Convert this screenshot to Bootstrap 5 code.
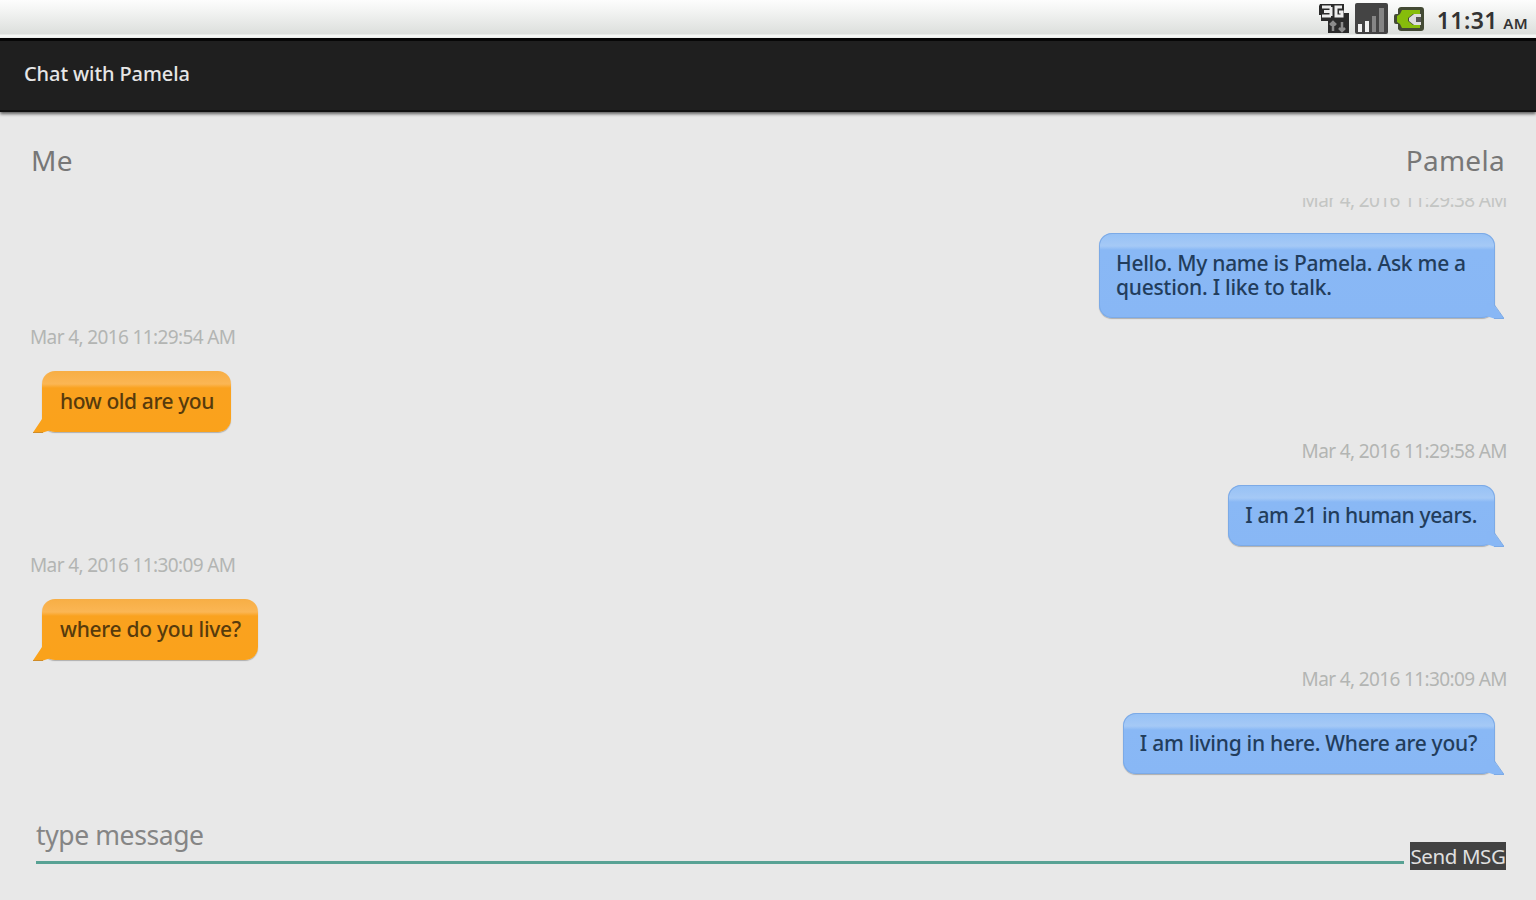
<!DOCTYPE html>
<html lang="en">
<head>
    <meta charset="UTF-8">
    <title>Chat with Pamela</title>
    <link href="https://cdn.jsdelivr.net/npm/bootstrap@5.3.3/dist/css/bootstrap.min.css" rel="stylesheet">
    <style>
        body {
            background-color: #e8e8e8;
            font-family: "Noto Sans", "Open Sans", sans-serif;
            line-height: 1.15;
        }

        .status-bar {
            height: 38px;
            background: linear-gradient(#fdfdfd 0, #f4f5f4 10px, #dcdfdc 34px, #f6f8f6 35px, #f6f8f6 100%);
        }

        .clock {
            font-size: 23px;
            font-weight: 600;
            color: #333;
            margin-left: 12px;
            letter-spacing: .4px;
            padding-top: 2px;
        }

        .clock-ampm {
            font-size: 15px;
            margin-left: -1px;
        }

        .title-bar {
            height: 74px;
            background-color: #1f1f1f;
            border-top: 3px solid #060606;
            border-bottom: 2px solid #111;
            box-shadow: 0 2px 3px rgba(0, 0, 0, .6);
            color: #e6e6e6;
            font-size: 20px;
            font-weight: 500;
            letter-spacing: -.1px;
            padding: 0 24px 4px;
        }

        .chat-names {
            height: 86px;
            padding: 31px 31px 0;
            font-size: 28px;
            line-height: 34px;
            letter-spacing: .3px;
            color: #777;
        }

        .chat-list {
            height: 581px;
        }

        .chat-date {
            height: 28px;
            margin: 0 29px 20px 30px;
            line-height: 28px;
            font-size: 19px;
            letter-spacing: -.62px;
            color: #b3b5b3;
        }

        .chat-date-first {
            line-height: 30px;
            color: #c3c5c3;
        }

        .bubble {
            margin: 0 41px 5px 42px;
            padding: 18px 17px 19px;
            border-radius: 13px;
            font-size: 21px;
            line-height: 24px;
            font-weight: 500;
            letter-spacing: -.27px;
            box-shadow: 0 1px 1px rgba(0, 0, 0, .25);
        }

        .bubble-wide {
            width: 396px;
        }

        .bubble-tight {
            letter-spacing: -.4px;
        }

        .bubble-me {
            padding-left: 18px;
            background: linear-gradient(#f7ae45 0, #fbb654 13px, #faa21f 17px, #faa21b 100%);
            color: #573b0c;
        }

        .bubble-her {
            padding-right: 18px;
            background: linear-gradient(#96c1f5 0, #a5c9f6 13px, #89b8f5 17px, #88b7f5 100%);
            color: #223d5c;
            box-shadow: 0 1px 1px rgba(0, 0, 0, .25), inset 0 0 0 1px #7caae6;
        }

        .bubble-tail {
            width: 22px;
            height: 20px;
            bottom: -1px;
        }

        .bubble-me .bubble-tail {
            left: -9px;
        }

        .bubble-her .bubble-tail {
            right: -9px;
        }

        .compose {
            height: 121px;
            padding: 0 30px 0 36px;
        }

        .message-input {
            height: 68px;
            margin-top: 17px;
            border-bottom: 3px solid #58a294;
            font-size: 26.500px;
            line-height: 34px;
            letter-spacing: -.4px;
            padding-top: 22px;
            color: #858585;
        }

        .send-btn {
            width: 96px;
            height: 28px;
            margin: 63px 0 0 6px;
            background-color: #424242;
            color: #e0e0e0;
            font-size: 20.500px;
            line-height: 28px;
            letter-spacing: -.4px;
        }
    </style>
</head>
<body class="overflow-hidden">
    <div class="status-bar d-flex align-items-center justify-content-end pe-2">
        <svg width="32" height="32" viewBox="0 0 32 32">
            <path d="M1 1h24v9h5v20H9V18H2v-6H0V3z" fill="#2b2b2b"/>
            <path d="M3 4h9M12 4v9M5 8.500h7M3 13h9M23 4h-6v9h6V9h-3" fill="none" stroke="#eee" stroke-width="3"/>
            <path d="M14 28v-8M11 22l3-3 3 3M23 19v8M20 25l3 3 3-3" fill="none" stroke="#8c8c8c" stroke-width="2.500"/>
        </svg>
        <svg width="33" height="32" viewBox="0 0 33 32" style="margin-left: 4px">
            <rect width="33" height="31" rx="2" fill="#444"/>
            <path d="M3 21h4v8H3zM10 18h4v11h-4z" fill="#f2f2f2"/>
            <path d="M17 13h4v16h-4zM24 5h5v24h-5z" fill="#858585"/>
        </svg>
        <svg width="31" height="26" viewBox="0 0 31 26" style="margin-left: 6px">
            <path d="M7 1h20q3 0 3 3v18q0 3-3 3H7q-2 0-3-2v-5H2q-2 0-2-2v-6q0-2 2-2h2V3q1-2 3-2z" fill="#434a34"/>
            <path d="M8 4h18v4h-7l-5 4v3l5 4h7v3H8l-2-4-3-2v-6l3-2z" fill="#86bd0b"/>
            <path d="M15 12l5-4h7v3h-4v5h4v3h-7l-5-4z" fill="#ddd"/>
            <path d="M22 11h5v5h-5z" fill="#555"/>
        </svg>
        <div class="clock text-nowrap">11:31 <span class="clock-ampm">AM</span></div>
    </div>
    <div class="title-bar d-flex align-items-center position-relative">Chat with Pamela</div>

    <div class="chat-names d-flex justify-content-between">
        <span>Me</span>
        <span>Pamela</span>
    </div>

    <!-- scrolled to the newest message, the oldest date runs under the names -->
    <div class="chat-list d-flex flex-column justify-content-end overflow-hidden">
        <div class="d-flex flex-column align-items-end">
            <div class="chat-date chat-date-first">Mar 4, 2016 11:29:38 AM</div>
            <div class="bubble bubble-her bubble-wide position-relative">
                Hello. My name is Pamela. Ask me a question. I like to talk.
                <svg class="bubble-tail position-absolute" viewBox="0 0 22 20"><path d="M12 1V6L22 19.500H12L4 17V6z" fill="#88b7f5"/><path d="M12.500 6L22 19.500H12" fill="none" stroke="#7caae6"/></svg>
            </div>
        </div>
        <div class="d-flex flex-column align-items-start">
            <div class="chat-date">Mar 4, 2016 11:29:54 AM</div>
            <div class="bubble bubble-me bubble-tight position-relative">
                how old are you
                <svg class="bubble-tail position-absolute" viewBox="0 0 22 20"><path d="M9 1V6L0 19.500H10L18 17V6z" fill="#faa21b"/><path d="M0 19.500H10" stroke="#cf8c28"/></svg>
            </div>
        </div>
        <div class="d-flex flex-column align-items-end">
            <div class="chat-date">Mar 4, 2016 11:29:58 AM</div>
            <div class="bubble bubble-her bubble-tight position-relative">
                I am 21 in human years.
                <svg class="bubble-tail position-absolute" viewBox="0 0 22 20"><path d="M12 1V6L22 19.500H12L4 17V6z" fill="#88b7f5"/><path d="M12.500 6L22 19.500H12" fill="none" stroke="#7caae6"/></svg>
            </div>
        </div>
        <div class="d-flex flex-column align-items-start">
            <div class="chat-date">Mar 4, 2016 11:30:09 AM</div>
            <div class="bubble bubble-me position-relative">
                where do you live?
                <svg class="bubble-tail position-absolute" viewBox="0 0 22 20"><path d="M9 1V6L0 19.500H10L18 17V6z" fill="#faa21b"/><path d="M0 19.500H10" stroke="#cf8c28"/></svg>
            </div>
        </div>
        <div class="d-flex flex-column align-items-end">
            <div class="chat-date">Mar 4, 2016 11:30:09 AM</div>
            <div class="bubble bubble-her position-relative">
                I am living in here. Where are you?
                <svg class="bubble-tail position-absolute" viewBox="0 0 22 20"><path d="M12 1V6L22 19.500H12L4 17V6z" fill="#88b7f5"/><path d="M12.500 6L22 19.500H12" fill="none" stroke="#7caae6"/></svg>
            </div>
        </div>
    </div>

    <div class="compose d-flex align-items-start">
        <div class="message-input flex-grow-1">type message</div>
        <button class="send-btn border-0 p-0 text-nowrap">Send MSG</button>
    </div>

    <script src="https://cdn.jsdelivr.net/npm/bootstrap@5.3.3/dist/js/bootstrap.bundle.min.js"></script>
</body>
</html>
